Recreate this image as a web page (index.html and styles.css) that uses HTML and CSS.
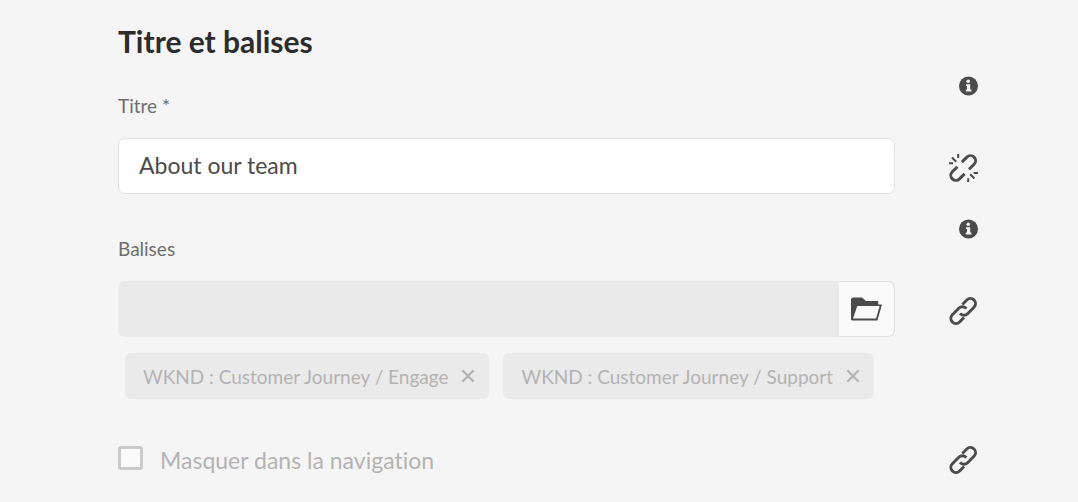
FILE: index.html
```html
<!DOCTYPE html>
<html lang="fr">
<head>
<meta charset="utf-8">
<meta name="viewport" content="width=device-width, initial-scale=1">
<title>Titre et balises</title>
<link rel="stylesheet" href="styles.css">
</head>
<body>
<svg class="sprite" aria-hidden="true">
  <symbol id="info" viewBox="0 0 20 20">
    <circle cx="10.5" cy="10" r="9.5" fill="currentColor"/>
    <circle cx="10.2" cy="5.2" r="1.8" fill="#f5f5f5"/>
    <path d="M8 8.2h4.2v5.4h1.2v1.9H7.8v-1.9H9v-3.6H8z" fill="#f5f5f5"/>
  </symbol>
  <symbol id="link" viewBox="0 0 29 28">
    <g transform="translate(14.2 14) rotate(-45)" fill="none" stroke="currentColor" stroke-width="2.9">
      <path d="M4-5.2H10.3a5.1 5.1 0 0 1 0 10.2H1.2A5.1 5.1 0 0 1-3.9-.6"/>
      <path d="M-4 5.2H-10.3a5.1 5.1 0 0 1 0-10.2H-1.2A5.1 5.1 0 0 1 3.9.6"/>
    </g>
  </symbol>
  <symbol id="unlink" viewBox="0 0 29 28">
    <g transform="translate(14.2 14) rotate(-45)" fill="none" stroke="currentColor" stroke-width="2.9">
      <path d="M3.2-5.1H10.3a5.1 5.1 0 0 1 0 10.2H3.2"/>
      <path d="M-3.2 5.1H-10.3a5.1 5.1 0 0 1 0-10.2H-3.2"/>
    </g>
    <path d="M9.2-.4v4.4M0 9.2h4M3 3.5l4.2 4.2M19.2 24.2v4.4M24.6 19h4.4M21.2 20.3l4.2 4.2" fill="none" stroke="currentColor" stroke-width="2"/>
  </symbol>
</svg>
<main class="page">
  <h1 class="heading">Titre et balises</h1>
  <form class="form">
    <div class="field">
      <div class="field-main">
        <label class="label" for="title">Titre *</label>
        <input class="text-box" id="title" type="text" value="About our team" required>
      </div>
      <div class="side">
        <button class="icon-button" type="button" aria-label="Aide sur le titre"><svg class="icon-info"><use href="#info"/></svg></button>
        <button class="icon-button" type="button" aria-label="Rétablir l’héritage du titre"><svg class="icon-link"><use href="#unlink"/></svg></button>
      </div>
    </div>
    <div class="field">
      <div class="field-main">
        <label class="label" for="tags">Balises</label>
        <div class="picker">
          <input class="picker-input" id="tags" type="text" disabled>
          <button class="picker-button" type="button" aria-label="Parcourir les balises">
            <svg class="icon-folder" viewBox="0 0 31 24"><path d="M0 22.5V2L1.6.4H11L15 4h12.2v3.5H31L26.4 23.6H1z" fill="currentColor"/><path d="M6.3 9H28.7l-3.7 12.6H2z" fill="#fafafa"/></svg>
          </button>
        </div>
      </div>
      <div class="side">
        <button class="icon-button" type="button" aria-label="Aide sur les balises"><svg class="icon-info"><use href="#info"/></svg></button>
        <button class="icon-button" type="button" aria-label="Annuler l’héritage des balises"><svg class="icon-link"><use href="#link"/></svg></button>
      </div>
    </div>
    <ul class="tags">
      <li class="tag">WKND : Customer Journey / Engage
        <button class="tag-remove" type="button" aria-label="Supprimer Engage" disabled><svg class="icon-cross" viewBox="0 0 14 14"><path d="M1.3 1.3l11.4 11.4M12.7 1.3L1.3 12.7" stroke="currentColor" stroke-width="2.2"/></svg></button>
      </li>
      <li class="tag">WKND : Customer Journey / Support
        <button class="tag-remove" type="button" aria-label="Supprimer Support" disabled><svg class="icon-cross" viewBox="0 0 14 14"><path d="M1.3 1.3l11.4 11.4M12.7 1.3L1.3 12.7" stroke="currentColor" stroke-width="2.2"/></svg></button>
      </li>
    </ul>
    <div class="check-row">
      <input class="check" id="hide" type="checkbox" disabled>
      <label class="check-label" for="hide">Masquer dans la navigation</label>
      <button class="icon-button" type="button" aria-label="Annuler l’héritage de la navigation"><svg class="icon-link"><use href="#link"/></svg></button>
    </div>
  </form>
</main>
</body>
</html>
```
FILE: styles.css
```css
* { box-sizing: border-box; }
body {
  margin: 0;
  background: #f5f5f5;
  color: #4b4b4b;
  font-family: Lato, "Open Sans", sans-serif;
  font-variant-ligatures: none;
}
.sprite { display: none; }
.page { padding: 21px 100px 28px 118px; }
.heading {
  margin: 0 0 15px;
  font-size: 30px;
  line-height: 40px;
  font-weight: 700;
  color: #2c2c2c;
}
.field { display: flex; gap: 54px; }
.field + .field { margin-top: 25px; }
.field-main { flex: 1; min-width: 0; padding-top: 16px; }
.label {
  display: block;
  margin-bottom: 18px;
  font-size: 19px;
  line-height: 28px;
  color: #6e6e6e;
}
.text-box {
  display: block;
  width: 100%;
  height: 56px;
  padding: 0 20px 2px;
  border: 1px solid #e1e1e1;
  border-radius: 7px;
  background: #fff;
  color: #4b4b4b;
  font: inherit;
  font-size: 23px;
}
.side {
  display: flex;
  flex-direction: column;
  justify-content: space-between;
  align-items: flex-end;
  padding-bottom: 12px;
}
.icon-button, .tag-remove {
  display: flex;
  padding: 0;
  border: 0;
  background: none;
  color: #4b4b4b;
}
.icon-info { width: 20px; height: 20px; }
.icon-link { width: 29px; height: 28px; }
.picker {
  display: flex;
  height: 56px;
  border-radius: 7px;
  background: #eaeaea;
}
.picker-input {
  flex: 1;
  min-width: 0;
  padding: 0 20px;
  border: 0;
  background: transparent;
  font: inherit;
  font-size: 23px;
}
.picker-button {
  display: flex;
  align-items: center;
  justify-content: center;
  width: 56px;
  padding: 0;
  border: 1px solid #e1e1e1;
  border-left: 0;
  border-radius: 0 7px 7px 0;
  background: #fafafa;
  color: #4b4b4b;
}
.icon-folder { width: 31px; height: 24px; }
.tags {
  display: flex;
  flex-wrap: wrap;
  gap: 14px;
  margin: 16px 0 0;
  padding: 0 0 0 7px;
  list-style: none;
}
.tag {
  display: flex;
  align-items: center;
  gap: 13px;
  height: 46px;
  padding: 0 14px 0 18px;
  border-radius: 6px;
  background: #eaeaea;
  color: #b3b3b3;
  font-size: 19px;
}
.tag-remove { color: #b3b3b3; }
.icon-cross { width: 14px; height: 14px; }
.check-row { display: flex; margin-top: 47px; }
.check {
  appearance: none;
  width: 25px;
  height: 24px;
  margin: 0;
  border: 3px solid #cacaca;
  border-radius: 3px;
  background: #fafafa;
}
.check-label {
  flex: 1;
  padding-left: 17px;
  font-size: 23px;
  line-height: 28px;
  color: #b3b3b3;
}
```
